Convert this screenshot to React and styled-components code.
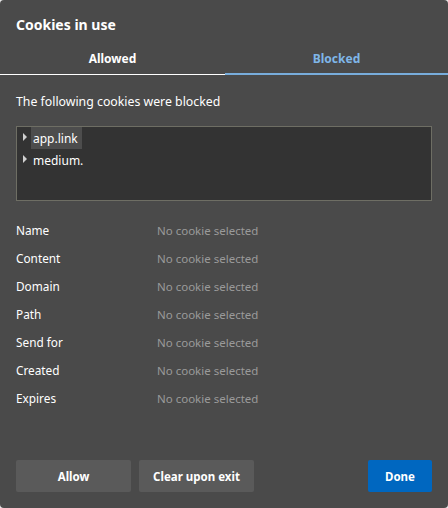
import React from "react";
import styled, { createGlobalStyle } from "styled-components";

const Global = createGlobalStyle`
  html, body { margin: 0; padding: 0; background: #e8e8e8; }
  body { font-family: "Noto Sans", "Open Sans", sans-serif; }
  * { box-sizing: border-box; }
`;

const Dialog = styled.div`
  width: 448px;
  height: 508px;
  background: #4a4a4a;
  color: #ffffff;
  border-radius: 4px;
  display: flex;
  flex-direction: column;
  overflow: hidden;
`;

const Title = styled.h1`
  margin: 0;
  padding: 16px 16px 0;
  font-size: 14px;
  font-weight: 700;
  line-height: 18px;
  height: 42px;
`;

const Tabs = styled.div`
  display: grid;
  grid-template-columns: 225px 1fr;
`;

const Tab = styled.div`
  height: ${(p) => (p.$active ? "33px" : "32px")};
  display: flex;
  align-items: center;
  justify-content: center;
  font-size: 12px;
  font-weight: 700;
  color: ${(p) => (p.$active ? "#7fb6e8" : "#ffffff")};
  border-bottom: ${(p) => (p.$active ? "2px solid #78addc" : "1px solid #ffffff")};
  padding-top: ${(p) => (p.$active ? "1px" : "0")};
  align-self: end;
`;

const Body = styled.div`
  padding: 18px 16px 0;
  flex: 1;
  display: flex;
  flex-direction: column;
`;

const Lead = styled.p`
  margin: 0;
  font-size: 12.3px;
  line-height: 18px;
`;

const Tree = styled.div`
  margin-top: 15px;
  height: 75px;
  background: #333333;
  border: 1px solid #6e6e64;
  padding: 0 0 0 4px;
  display: flex;
  flex-direction: column;
`;

const Node = styled.div`
  display: flex;
  align-items: center;
  height: 22px;
  font-size: 12px;
`;

const Caret = styled.span`
  width: 0;
  height: 0;
  border-top: 4px solid transparent;
  border-bottom: 4px solid transparent;
  border-left: 4px solid #d0d0d0;
  margin: -3px 6px 0 2px;
`;

const NodeLabel = styled.span`
  padding: 0 4px 0 2px;
  height: 22px;
  display: flex;
  align-items: center;
  margin-left: -2px;
  background: ${(p) => (p.$selected ? "#4d4d4d" : "transparent")};
`;

const Details = styled.dl`
  margin: 15px 0 0;
  display: grid;
  grid-template-columns: 141px 1fr;
  grid-auto-rows: 28px;
  align-items: center;
`;

const Label = styled.dt`
  margin: 0;
  font-size: 11.8px;
`;

const Value = styled.dd`
  margin: 0;
  font-size: 11.5px;
  color: #9a9a9a;
`;

const Footer = styled.div`
  padding: 0 16px 16px;
  display: flex;
  gap: 8px;
`;

const Button = styled.button`
  height: 32px;
  width: ${(p) => p.$w}px;
  border: none;
  border-radius: 2px;
  font-family: inherit;
  font-size: 11.5px;
  font-weight: 700;
  color: #ffffff;
  background: ${(p) => (p.$primary ? "#0067c0" : "#5a5a5a")};
  margin-left: ${(p) => (p.$push ? "auto" : "0")};
`;

const rows = ["Name", "Content", "Domain", "Path", "Send for", "Created", "Expires"];

export default function App() {
  return (
    <>
      <Global />
      <Dialog>
        <Title>Cookies in use</Title>
        <Tabs>
          <Tab>Allowed</Tab>
          <Tab $active>Blocked</Tab>
        </Tabs>
        <Body>
          <Lead>The following cookies were blocked</Lead>
          <Tree>
            <Node>
              <Caret />
              <NodeLabel $selected>app.link</NodeLabel>
            </Node>
            <Node>
              <Caret />
              <NodeLabel>medium.</NodeLabel>
            </Node>
          </Tree>
          <Details>
            {rows.map((r) => (
              <React.Fragment key={r}>
                <Label>{r}</Label>
                <Value>No cookie selected</Value>
              </React.Fragment>
            ))}
          </Details>
        </Body>
        <Footer>
          <Button $w={115}>Allow</Button>
          <Button $w={115}>Clear upon exit</Button>
          <Button $w={64} $primary $push>Done</Button>
        </Footer>
      </Dialog>
    </>
  );
}
